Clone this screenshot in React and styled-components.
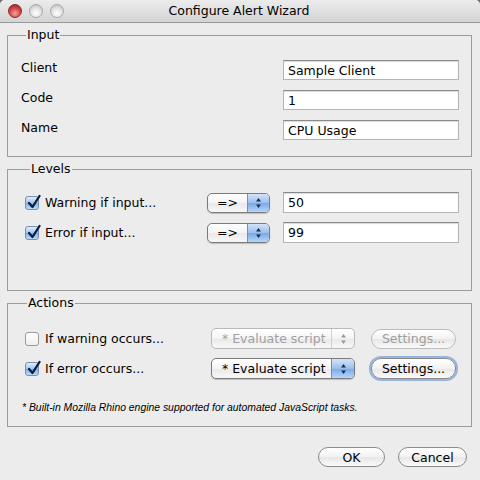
import React from "react";
import styled, { createGlobalStyle, css } from "styled-components";

const Global = createGlobalStyle`
  html, body { margin: 0; padding: 0; background: #6e6e6e; }
  body { font-family: "DejaVu Sans", "Liberation Sans", sans-serif; font-size: 12.5px; color: #000; }
`;

const Window = styled.div`
  width: 480px;
  height: 480px;
  background: #ececec;
  border-radius: 5px 5px 0 0;
  overflow: hidden;
  display: flex;
  flex-direction: column;
`;

const TitleBar = styled.div`
  height: 22px;
  flex: none;
  display: flex;
  align-items: center;
  background: linear-gradient(#ececec, #d4d4d4);
  border-bottom: 1px solid #9a9a9a;
`;

const Lights = styled.div`
  display: flex;
  gap: 7px;
  padding-left: 8px;
`;

const Light = styled.span`
  width: 14px;
  height: 14px;
  border-radius: 50%;
  box-sizing: border-box;
  border: 1px solid ${(p) => (p.red ? "#8c2b2b" : "#a8a8a8")};
  background: ${(p) =>
    p.red
      ? "radial-gradient(circle at 50% 70%, #f3a3a0 0%, #d9524f 45%, #a92c2c 80%)"
      : "radial-gradient(circle at 50% 70%, #ffffff 0%, #e6e6e6 45%, #c4c4c4 85%)"};
`;

const Title = styled.div`
  flex: 1;
  text-align: center;
  margin-left: -66px;
  font-size: 12.5px;
  line-height: 16px;
`;

const Body = styled.div`
  padding: 4px 8px 0 7px;
  display: flex;
  flex-direction: column;
  gap: 4px;
`;

const Group = styled.fieldset`
  margin: 0;
  border: 1px solid #9c9c9c;
  padding: ${(p) => p.pad};
  min-width: 0;
`;

const Legend = styled.legend`
  padding: 0 1px;
  margin-left: 5px;
  line-height: 16px;
  font-size: 12.5px;
`;

const FieldGrid = styled.div`
  display: grid;
  grid-template-columns: 1fr 176px;
  row-gap: 10px;
`;

const Label = styled.div`
  line-height: 16px;
`;

const TextField = styled.div`
  height: ${(p) => p.h || 20}px;
  box-sizing: border-box;
  background: #fff;
  border: 1px solid #b4b4b4;
  border-top-color: #8a8a8a;
  box-shadow: inset 0 1px 1px rgba(0, 0, 0, 0.15);
  padding: 0 4px;
  display: flex;
  align-items: center;
  font-size: 12.5px;
`;

const Rows = styled.div`
  display: grid;
  grid-template-columns: ${(p) => p.cols};
  column-gap: ${(p) => p.gap}px;
  row-gap: 9px;
  align-items: center;
  padding-left: ${(p) => p.indent || 0}px;
`;

const Check = styled.label`
  display: flex;
  align-items: center;
  gap: 6px;
  line-height: 16px;
`;

const Box = styled.span`
  width: 14px;
  height: 14px;
  box-sizing: border-box;
  border-radius: 3px;
  border: 1px solid #7c8ea8;
  position: relative;
  flex: none;
  background: ${(p) =>
    p.checked
      ? "linear-gradient(#dfeefe, #9ec4ee 50%, #7aaee6 50%, #bcdcfb)"
      : "linear-gradient(#ffffff, #eeeeee)"};
  ${(p) => !p.checked && css`border-color: #9a9a9a;`}
  svg { position: absolute; left: 1px; top: -3px; }
`;

const Popup = styled.div`
  height: ${(p) => p.h || 20}px;
  box-sizing: border-box;
  display: flex;
  border: 1px solid ${(p) => (p.disabled ? "#b9b9b9" : "#7b7b7b")};
  border-radius: 5px;
  overflow: hidden;
  background: linear-gradient(#ffffff, #f4f4f4 50%, #e8e8e8 50%, #f8f8f8);
  color: ${(p) => (p.disabled ? "#a0a0a0" : "#000")};
  box-shadow: ${(p) => (p.disabled ? "none" : "0 1px 1px rgba(0,0,0,0.2)")};
`;

const PopupText = styled.div`
  flex: 1;
  display: flex;
  align-items: center;
  justify-content: ${(p) => (p.center ? "center" : "flex-start")};
  padding-left: ${(p) => (p.center ? 0 : 10)}px;
  white-space: nowrap;
  font-size: 12.5px;
`;

const Stepper = styled.div`
  width: ${(p) => p.w}px;
  flex: none;
  display: flex;
  align-items: center;
  justify-content: center;
  border-left: 1px solid ${(p) => (p.disabled ? "#cfcfcf" : "#6f8fbd")};
  background: ${(p) =>
    p.disabled
      ? "transparent"
      : "linear-gradient(#d3e4f8, #99bfee 50%, #78a8e6 50%, #b5d5fa)"};
`;

const Button = styled.div`
  height: ${(p) => p.h || 20}px;
  width: ${(p) => p.w}px;
  box-sizing: border-box;
  border-radius: 10px;
  border: 1px solid ${(p) => (p.disabled ? "#bcbcbc" : "#8a8a8a")};
  background: linear-gradient(#ffffff, #f2f2f2 50%, #e6e6e6 50%, #fafafa);
  color: ${(p) => (p.disabled ? "#9d9d9d" : "#000")};
  display: flex;
  align-items: center;
  justify-content: center;
  font-size: 12.5px;
  ${(p) =>
    p.focused &&
    css`
      box-shadow: 0 0 0 2px rgba(122, 162, 220, 0.75);
    `}
`;

const Note = styled.div`
  margin-top: 23px;
  font-family: "Liberation Sans", Arial, sans-serif;
  font-style: italic;
  font-size: 10.4px;
  line-height: 12px;
  white-space: nowrap;
`;

const Footer = styled.div`
  display: flex;
  justify-content: flex-end;
  gap: 13px;
  padding: 20px 13px 0 0;
`;

function Arrows({ color }) {
  return (
    <svg width="7" height="12" viewBox="0 0 7 12">
      <path d="M3.5 1 L6 4.5 L1 4.5 Z" fill={color} />
      <path d="M3.5 11 L6 7.5 L1 7.5 Z" fill={color} />
    </svg>
  );
}

function CheckBox({ checked, children }) {
  return (
    <Check>
      <Box checked={checked}>
        {checked && (
          <svg width="14" height="16" viewBox="0 0 14 16">
            <path
              d="M2 9 L5.5 13 L12.5 2"
              fill="none"
              stroke="#0d1c44"
              strokeWidth="2.3"
              strokeLinecap="round"
              strokeLinejoin="round"
            />
          </svg>
        )}
      </Box>
      {children}
    </Check>
  );
}

function Select({ value, disabled, wide }) {
  return (
    <Popup disabled={disabled} h={wide ? 21 : 20}>
      <PopupText center={!wide}>{value}</PopupText>
      <Stepper w={wide ? 22 : 21} disabled={disabled}>
        <Arrows color={disabled ? "#9a9a9a" : "#1b2d52"} />
      </Stepper>
    </Popup>
  );
}

export default function App() {
  return (
    <>
      <Global />
      <Window>
        <TitleBar>
          <Lights>
            <Light red />
            <Light />
            <Light />
          </Lights>
          <Title>Configure Alert Wizard</Title>
        </TitleBar>
        <Body>
          <Group pad="17px 12px 16px 13px">
            <Legend>Input</Legend>
            <FieldGrid>
              <Label>Client</Label>
              <TextField>Sample Client</TextField>
              <Label>Code</Label>
              <TextField>1</TextField>
              <Label>Name</Label>
              <TextField>CPU Usage</TextField>
            </FieldGrid>
          </Group>

          <Group pad="15px 12px 47px 17px">
            <Legend>Levels</Legend>
            <Rows cols="1fr 63px 176px" gap={13}>
              <CheckBox checked>Warning if input...</CheckBox>
              <Select value="=>" />
              <TextField h={21}>50</TextField>
              <CheckBox checked>Error if input...</CheckBox>
              <Select value="=>" />
              <TextField h={21}>99</TextField>
            </Rows>
          </Group>

          <Group pad="17px 15px 12px 14px">
            <Legend>Actions</Legend>
            <Rows cols="1fr 144px 85px" gap={16} indent={3}>
              <CheckBox>If warning occurs...</CheckBox>
              <Select value="* Evaluate script" disabled wide />
              <Button w={85} disabled>Settings...</Button>
              <CheckBox checked>If error occurs...</CheckBox>
              <Select value="* Evaluate script" wide />
              <Button w={85} h={21} focused>Settings...</Button>
            </Rows>
            <Note>
              * Built-in Mozilla Rhino engine supported for automated JavaScript tasks.
            </Note>
          </Group>
        </Body>
        <Footer>
          <Button w={67}>OK</Button>
          <Button w={69}>Cancel</Button>
        </Footer>
      </Window>
    </>
  );
}
